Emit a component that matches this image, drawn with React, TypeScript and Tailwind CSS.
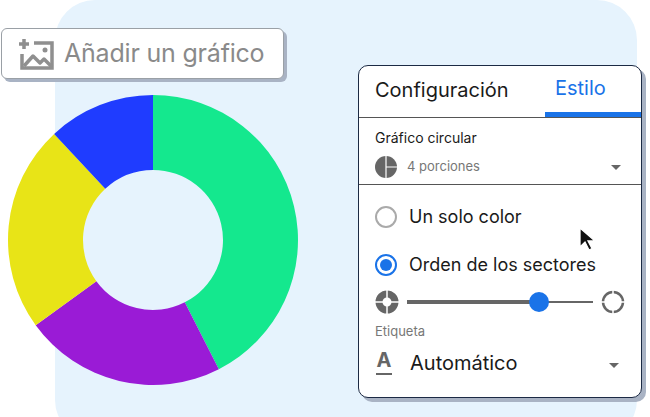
import React from 'react';

const C = { x: 153, y: 240 };
function pt(r: number, deg: number) {
  const a = (deg * Math.PI) / 180;
  return [C.x + r * Math.sin(a), C.y - r * Math.cos(a)];
}
function seg(a0: number, a1: number, R = 145, r = 70) {
  const [x0, y0] = pt(R, a0), [x1, y1] = pt(R, a1), [x2, y2] = pt(r, a1), [x3, y3] = pt(r, a0);
  const big = a1 - a0 > 180 ? 1 : 0;
  return `M${x0} ${y0}A${R} ${R} 0 ${big} 1 ${x1} ${y1}L${x2} ${y2}A${r} ${r} 0 ${big} 0 ${x3} ${y3}Z`;
}

export default function App() {
  return (
    <div className="relative w-[650px] h-[417px] bg-white overflow-hidden" style={{ fontFamily: 'Inter, "Liberation Sans", sans-serif' }}>
      <div className="absolute left-[55px] top-0 w-[582px] h-[440px] rounded-[40px] bg-[#e6f3fd]" />
      <svg className="absolute left-0 top-0" width="310" height="417">
        <path d={seg(0, 153)} fill="#14e88e" />
        <path d={seg(153, 234)} fill="#9a1bd6" />
        <path d={seg(234, 317)} fill="#e8e417" />
        <path d={seg(317, 360)} fill="#1f3cff" />
      </svg>

      <div className="absolute left-[1px] top-[28px] w-[283px] h-[51px] rounded-md border border-[#9aa0a6] bg-white shadow-[3px_3px_0_#a9b3c4] flex items-center gap-2 px-4">
        <svg width="38" height="34" viewBox="0 0 38 34" fill="none" stroke="#8f8f8f" strokeWidth="3.5">
          <path d="M6 2v10M1 7h10" />
          <path d="M16 6h18v25H4V17" />
          <path d="M6 29l9-10 7 7 4-4 8 8" strokeLinejoin="round" />
          <circle cx="27" cy="13" r="2.5" fill="#8f8f8f" stroke="none" />
        </svg>
        <span className="text-[25px] text-[#8a8a8a] tracking-[-0.2px]">Añadir un gráfico</span>
      </div>

      <div className="absolute left-[358px] top-[65px] w-[284px] h-[333px] rounded-[10px] border-[1.5px] border-[#1c2a44] bg-white shadow-[4px_4px_0_#a9b3c4] overflow-hidden">
        <div className="flex h-[52px] items-end border-b border-[#555]">
          <div className="flex-1 pl-4 pb-3 text-[20px] text-[#1a1a1a]">Configuración</div>
          <div className="w-[96px] h-full flex flex-col justify-end">
            <div className="pl-[10px] pb-[9px] text-[20px] text-[#1a73e8]">Estilo</div>
            <div className="h-[5px] bg-[#1a73e8]" />
          </div>
        </div>
        <div className="px-4 pt-[9px] h-[67px] border-b border-[#555]">
          <div className="text-[14px] text-[#1a1a1a]">Gráfico circular</div>
          <div className="flex items-center mt-[8px]">
            <svg width="22" height="22" viewBox="0 0 22 22">
              <circle cx="11" cy="11" r="11" fill="#666" />
              <path d="M11 0v22M11 11h11" stroke="#fff" strokeWidth="1.2" />
            </svg>
            <span className="ml-[10px] text-[13px] text-[#777]">4 porciones</span>
            <span className="ml-auto mr-[4px] w-0 h-0 border-l-[5px] border-r-[5px] border-t-[5px] border-l-transparent border-r-transparent border-t-[#666]" />
          </div>
        </div>
        <div className="px-4 pt-[18px]">
          <div className="flex items-center gap-[12px]">
            <span className="w-[22px] h-[22px] rounded-full border-2 border-[#aaa]" />
            <span className="text-[18px] text-[#1a1a1a]">Un solo color</span>
          </div>
          <div className="flex items-center gap-[12px] mt-[21px]">
            <span className="w-[22px] h-[22px] rounded-full border-2 border-[#1a73e8] flex items-center justify-center">
              <span className="w-[12px] h-[12px] rounded-full bg-[#1a73e8]" />
            </span>
            <span className="text-[18px] text-[#1a1a1a]">Orden de los sectores</span>
          </div>
          <div className="flex items-center mt-[12px]">
            <svg width="24" height="24" viewBox="0 0 24 24">
              <circle cx="12" cy="12" r="8" fill="none" stroke="#666" strokeWidth="7" />
              <path d="M12 0v24M0 12h24" stroke="#fff" strokeWidth="1.5" />
            </svg>
            <div className="relative flex-1 h-[20px] mx-[8px] flex items-center">
              <div className="w-[130px] h-[4px] bg-[#666]" />
              <div className="flex-1 h-[1.5px] bg-[#666]" />
              <span className="absolute left-[122px] w-[20px] h-[20px] rounded-full bg-[#1a73e8]" />
            </div>
            <svg width="24" height="24" viewBox="0 0 24 24">
              <circle cx="12" cy="12" r="10" fill="none" stroke="#666" strokeWidth="2.5" />
              <path d="M12 0v4M12 20v4M0 12h4M20 12h4" stroke="#fff" strokeWidth="1.5" />
            </svg>
          </div>
          <div className="mt-[8px] text-[13px] text-[#777]">Etiqueta</div>
          <div className="flex items-center mt-[6px]">
            <div className="flex flex-col items-center w-[18px]">
              <span className="text-[20px] font-bold leading-none text-[#666]">A</span>
              <span className="w-[16px] h-[2px] bg-[#666] mt-[3px]" />
            </div>
            <span className="ml-[17px] text-[20px] text-[#1a1a1a]">Automático</span>
            <span className="ml-auto mr-[6px] mt-[6px] w-0 h-0 border-l-[5px] border-r-[5px] border-t-[5px] border-l-transparent border-r-transparent border-t-[#666]" />
          </div>
        </div>
      </div>

      <svg className="absolute left-[578px] top-[226px]" width="18" height="26" viewBox="0 0 18 26">
        <path d="M2 2v19l5-5 4 8 3-1.5-4-7.5h7z" fill="#111" stroke="#fff" strokeWidth="1.3" />
      </svg>
    </div>
  );
}
